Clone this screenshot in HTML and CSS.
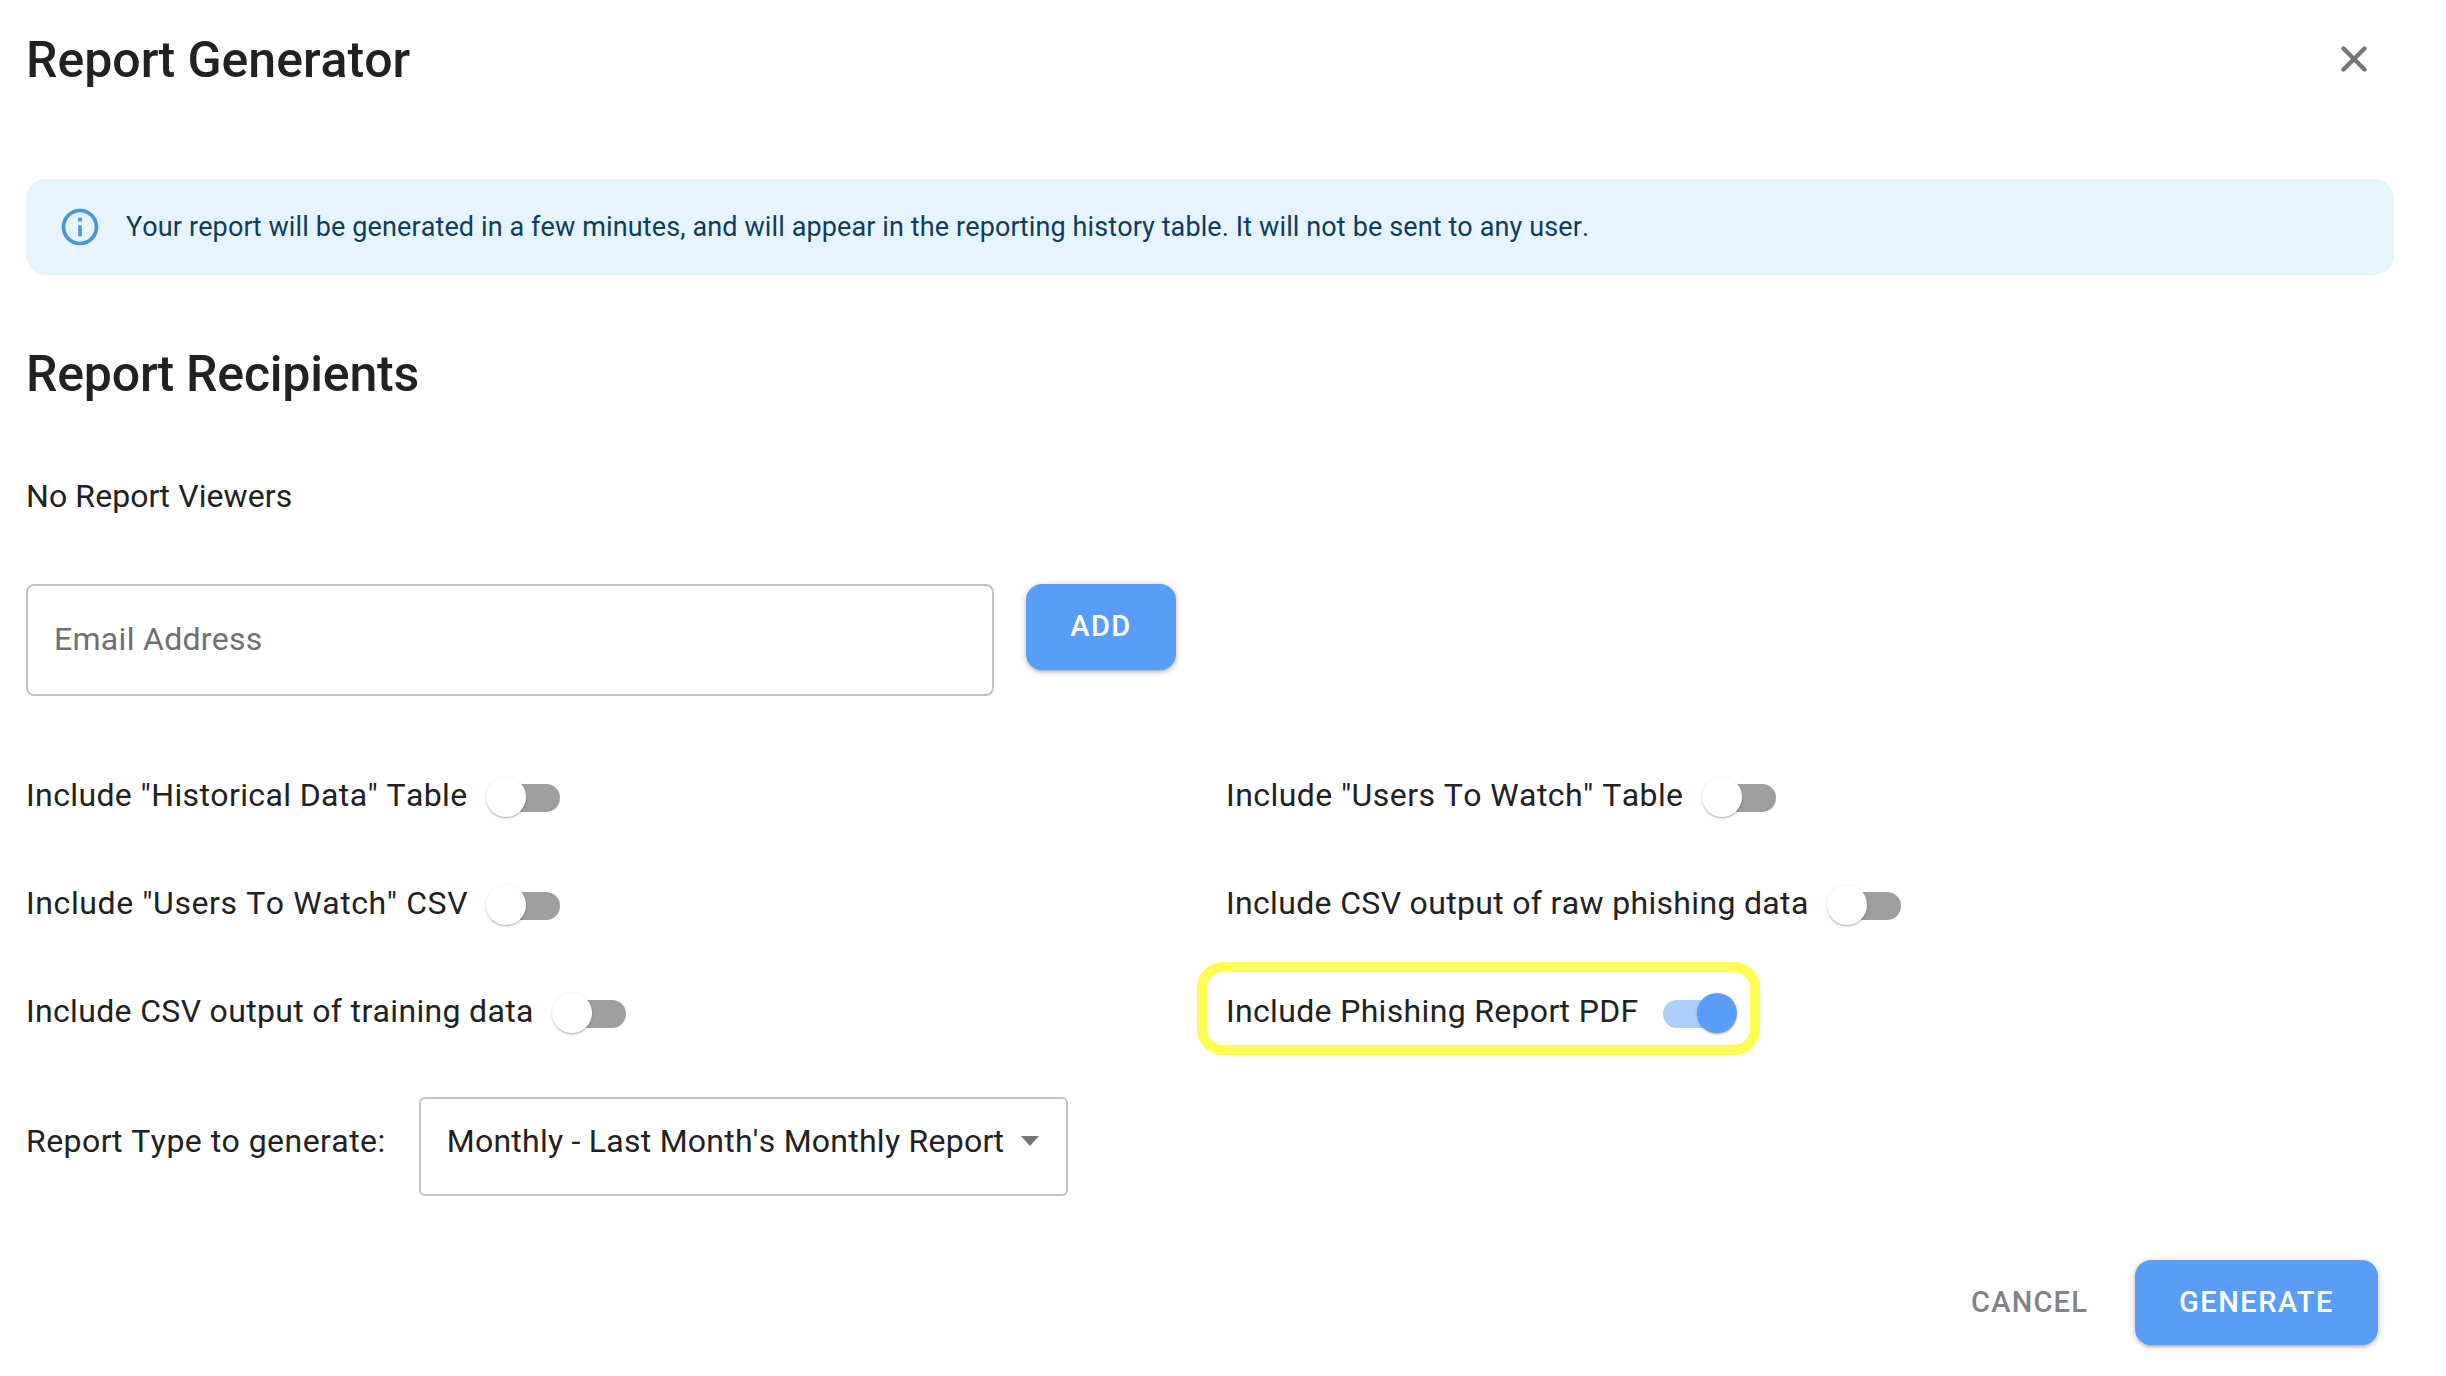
FILE: index.html
```html
<!DOCTYPE html>
<html lang="en">
<head>
<meta charset="utf-8">
<title>Report Generator</title>
<link rel="stylesheet" href="styles.css">
</head>
<body>
<main class="dialog">
  <header class="header">
    <h1 class="title">Report Generator</h1>
    <button class="close" aria-label="Close">
      <svg class="close-icon" viewBox="0 0 26 26"><path d="M2.5 2.5l21 21M23.5 2.5l-21 21"/></svg>
    </button>
  </header>
  <div class="alert">
    <svg class="info-icon" viewBox="0 0 24 24"><path d="M11 7h2v2h-2zm0 4h2v6h-2zm1-9C6.48 2 2 6.48 2 12s4.48 10 10 10 10-4.48 10-10S17.52 2 12 2zm0 18c-4.41 0-8-3.59-8-8s3.59-8 8-8 8 3.59 8 8-3.59 8-8 8z"/></svg>
    <span class="alert-text">Your report will be generated in a few minutes, and will appear in the reporting history table. It will not be sent to any user.</span>
  </div>
  <h2 class="section-title">Report Recipients</h2>
  <p class="empty">No Report Viewers</p>
  <div class="add-row">
    <input class="email" type="text" placeholder="Email Address">
    <button class="btn add">ADD</button>
  </div>
  <div class="toggles">
    <div class="toggle"><span class="label label-history">Include "Historical Data" Table</span><span class="switch"><span class="thumb"></span></span></div>
    <div class="toggle"><span class="label label-watch">Include "Users To Watch" Table</span><span class="switch"><span class="thumb"></span></span></div>
    <div class="toggle"><span class="label label-wide">Include "Users To Watch" CSV</span><span class="switch"><span class="thumb"></span></span></div>
    <div class="toggle"><span class="label">Include CSV output of raw phishing data</span><span class="switch"><span class="thumb"></span></span></div>
    <div class="toggle"><span class="label">Include CSV output of training data</span><span class="switch"><span class="thumb"></span></span></div>
    <div class="toggle"><span class="label">Include Phishing Report PDF</span><span class="switch on"><span class="thumb"></span></span><span class="highlight"></span></div>
  </div>
  <div class="type-row">
    <span class="label label-type">Report Type to generate:</span>
    <div class="select"><span class="label label-value">Monthly - Last Month's Monthly Report</span><span class="arrow"></span></div>
  </div>
  <footer class="actions">
    <button class="cancel">CANCEL</button>
    <button class="btn generate">GENERATE</button>
  </footer>
</main>
</body>
</html>
```
FILE: styles.css
```css
* { box-sizing: border-box; }
html, body { margin: 0; background: #fff; }
body { font-family: Roboto, "Liberation Sans", sans-serif; color: #212121; overflow: hidden; font-kerning: none; }
.dialog { width: 2446px; height: 1376px; padding: 0 52px 0 26px; }
.header { height: 118px; display: flex; align-items: center; justify-content: space-between; }
.title { margin: 2px 0 0; font-size: 50px; font-weight: 500; line-height: 60px; letter-spacing: 0; }
.close { border: 0; background: none; padding: 0; margin-right: 27px; display: flex; }
.close-icon { width: 26px; height: 26px; fill: none; stroke: #757575; stroke-width: 4.4; stroke-linecap: round; }
.alert { margin-top: 61px; height: 96px; border-radius: 20px; background: #e6f4fd; padding-left: 32px; display: flex; align-items: center; gap: 24px; }
.info-icon { width: 44px; height: 44px; fill: #4b94dc; flex: none; }
.alert-text { font-size: 27px; line-height: 40px; color: #0e3c60; letter-spacing: 0.115px; }
.section-title { margin: 69px 0 -1px; font-size: 50px; font-weight: 500; line-height: 60px; letter-spacing: -0.2px; }
.empty { margin: 73px 0 0; font-size: 32px; line-height: 40px; letter-spacing: 0.1px; }
.add-row { margin-top: 68px; display: flex; align-items: flex-start; gap: 32px; }
.email { width: 968px; height: 112px; border: 2px solid #c4c4c4; border-radius: 8px; padding: 0 26px 2px; font: 32px Roboto, sans-serif; letter-spacing: 0.3px; outline: none; }
.email::placeholder { color: #6f6f6f; opacity: 1; }
.btn { border: 0; background: #589ef8; color: #fff; font-family: Roboto, sans-serif; font-weight: 500; font-size: 29px; letter-spacing: 1.5px; border-radius: 16px; padding: 0 0 2px; box-shadow: 0 3px 3px -2px rgba(0,0,0,.2), 0 2px 5px rgba(0,0,0,.14), 0 1px 10px rgba(0,0,0,.12); }
.add { width: 150px; height: 86px; }
.toggles { margin-top: 45px; display: grid; grid-template-columns: 1200px 1fr; grid-auto-rows: 108px; }
.toggle { position: relative; display: flex; align-items: center; }
.label { font-size: 32px; line-height: 40px; letter-spacing: 0.33px; color: #212121; white-space: nowrap; }
.label-history { letter-spacing: 0.38px; }
.label-watch { letter-spacing: 0.43px; }
.label-wide { letter-spacing: 0.59px; }
.label-type { letter-spacing: 0.45px; }
.label-value { letter-spacing: 0.25px; }
.switch { position: relative; width: 68px; height: 28px; margin-left: 24px; border-radius: 14px; background: #9e9e9e; top: 3px; flex: none; }
.thumb { position: absolute; left: -6px; top: -7px; width: 40px; height: 40px; border-radius: 50%; background: #fff; box-shadow: 0 2px 2px -1px rgba(0,0,0,.25), 0 1px 3px rgba(0,0,0,.16); }
.switch.on { background: #abcefb; }
.switch.on .thumb { left: 34px; background: #589ef8; }
.highlight { position: absolute; left: -29px; top: 5px; width: 563px; height: 93px; border: 10px solid #fffc52; border-radius: 26px; }
.type-row { margin-top: 32px; display: flex; align-items: flex-start; gap: 33px; }
.type-row > .label { margin-top: 24px; }
.select { width: 649px; height: 99px; border: 2px solid #c4c4c4; border-radius: 6px; padding: 22px 0 0 26px; display: flex; align-items: flex-start; }
.arrow { margin: 15px 0 0 17px; width: 0; height: 0; border-left: 9px solid transparent; border-right: 9px solid transparent; border-top: 10px solid #757575; }
.actions { margin-top: 64px; padding-right: 16px; display: flex; justify-content: flex-end; align-items: center; gap: 47px; }
.cancel { border: 0; background: none; padding: 0 0 2px; color: #808488; font-family: Roboto, sans-serif; font-weight: 500; font-size: 29px; letter-spacing: 1.2px; }
.generate { width: 243px; height: 85px; }
```
